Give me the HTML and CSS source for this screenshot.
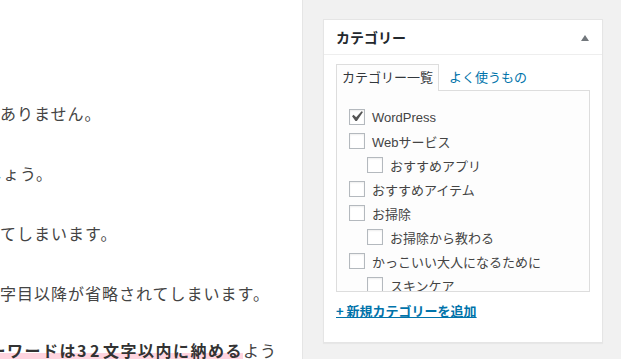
FILE: index.html
```html
<!DOCTYPE html>
<html lang="ja">
<head>
<meta charset="utf-8">
<title>カテゴリー</title>
<link rel="stylesheet" href="styles.css">
</head>
<body>
<div class="page">
  <main class="editor">
    <p class="line">ありません。</p>
    <p class="line shift-small">しょう。</p>
    <p class="line">てしまいます。</p>
    <p class="line tight">字目以降が省略されてしまいます。</p>
    <p class="line shift-large"><strong class="mark">キーワードは<span class="num">32</span>文字以内に納める</strong>よう</p>
  </main>
  <aside class="side">
    <section class="postbox">
      <header class="postbox-head">
        <h2 class="postbox-title">カテゴリー</h2>
        <svg class="toggle" width="8" height="6" viewBox="0 0 8 6"><polygon points="4,0 8,6 0,6" fill="#72777c"/></svg>
      </header>
      <div class="inside">
        <ul class="tabs">
          <li class="tab active">カテゴリー一覧</li>
          <li class="tab"><a class="tab-link" href="#">よく使うもの</a></li>
        </ul>
        <div class="panel">
          <ul class="checklist">
            <li><label class="item"><span class="cb"><svg class="check" viewBox="0 0 20 20" width="21" height="21"><path d="M14.83 4.89l1.34.94-5.81 8.38H9.020L5.78 9.67l1.34-1.25 2.57 2.4z" fill="#555"/></svg></span>WordPress</label></li>
            <li><label class="item"><span class="cb"></span>Webサービス</label>
              <ul class="children">
                <li><label class="item"><span class="cb"></span>おすすめアプリ</label></li>
              </ul>
            </li>
            <li><label class="item"><span class="cb"></span>おすすめアイテム</label></li>
            <li><label class="item"><span class="cb"></span>お掃除</label>
              <ul class="children">
                <li><label class="item"><span class="cb"></span>お掃除から教わる</label></li>
              </ul>
            </li>
            <li><label class="item"><span class="cb"></span>かっこいい大人になるために</label>
              <ul class="children">
                <li><label class="item"><span class="cb"></span>スキンケア</label></li>
              </ul>
            </li>
          </ul>
        </div>
        <p class="add"><a class="add-link" href="#">+ 新規カテゴリーを追加</a></p>
      </div>
    </section>
  </aside>
</div>
</body>
</html>
```

FILE: styles.css
```css
html, body {
  margin: 0;
  padding: 0;
  height: 100%;
}

body {
  background: #f1f1f1;
  font-family: "Liberation Sans", "Noto Sans CJK JP", sans-serif;
  color: #444;
  overflow: hidden;
}

.page {
  display: flex;
  height: 359px;
}

.editor {
  flex: none;
  width: 302px;
  background: #fff;
  border-right: 1px solid #e5e5e5;
  overflow: hidden;
  padding-top: 99px;
}

.line {
  margin: 0 0 32px;
  font-family: "Noto Sans CJK JP", sans-serif;
  font-size: 16px;
  line-height: 28px;
  letter-spacing: 1px;
  white-space: nowrap;
  color: #444;
}

.line.tight {
  margin-bottom: 29px;
}

.shift-small {
  text-indent: -14px;
}

.shift-large {
  text-indent: -28px;
}

.mark {
  font-weight: 700;
  color: #333;
  letter-spacing: 1.5px;
  background: linear-gradient(transparent 62%, #ffd4df 62%);
}

.num {
  letter-spacing: 3.5px;
}

.side {
  flex: none;
  width: 280px;
  margin-left: 20px;
  padding-top: 19px;
}

.postbox {
  background: #fff;
  border: 1px solid #e5e5e5;
  box-shadow: 0 1px 1px rgba(0, 0, 0, 0.04);
}

.postbox-head {
  display: flex;
  align-items: center;
  justify-content: space-between;
  height: 34px;
  padding: 0 13px 0 12px;
  border-bottom: 1px solid #eee;
}

.postbox-title {
  margin: 0;
  font-family: "Noto Sans CJK JP", sans-serif;
  font-size: 14px;
  font-weight: 700;
  line-height: 18px;
  color: #23282d;
}

.toggle {
  display: block;
  margin-top: 1px;
}

.inside {
  padding: 9px 12px 12px;
}

.tabs {
  list-style: none;
  margin: 0;
  padding: 0;
  display: flex;
  gap: 4px;
  font-family: "Noto Sans CJK JP", sans-serif;
  font-size: 13px;
  line-height: 17px;
}

.tab {
  padding: 3px 5px 6px;
  margin-bottom: -1px;
  border: 1px solid transparent;
  border-bottom: 0;
  color: #32373c;
}

.tab.active {
  position: relative;
  z-index: 1;
  background: #fdfdfd;
  border-color: #ddd;
}

.tab-link {
  color: #0073aa;
  text-decoration: none;
}

.panel {
  height: 200px;
  border: 1px solid #ddd;
  background: #fdfdfd;
  padding: 0 12px;
  overflow: hidden;
}

.checklist {
  list-style: none;
  margin: 0;
  padding: 14px 0 0;
}

.children {
  list-style: none;
  margin: 0;
  padding: 0 0 0 18px;
}

.item {
  display: flex;
  align-items: center;
  height: 24px;
  font-size: 13px;
  color: #444;
  white-space: nowrap;
}

.cb {
  flex: none;
  position: relative;
  width: 16px;
  height: 16px;
  box-sizing: border-box;
  border: 1px solid #b4b9be;
  background: #fff;
  box-shadow: inset 0 1px 2px rgba(0, 0, 0, 0.07);
  margin-right: 7px;
}

.check {
  position: absolute;
  left: -4px;
  top: -4px;
}

.add {
  margin: 10px 0 10px;
  font-family: "Noto Sans CJK JP", sans-serif;
  font-size: 13px;
  line-height: 18px;
  font-weight: 700;
}

.add-link {
  color: #0073aa;
  text-decoration: underline;
}
```
